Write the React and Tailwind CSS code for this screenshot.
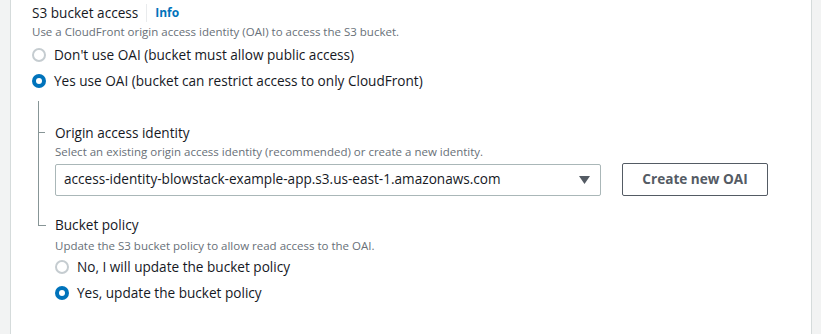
/**
 * S3 bucket access form section (CloudFront origin settings).
 */

function Radio({ checked, label }) {
  return (
    <label className="flex items-center gap-[8px] h-[26px]">
      {checked ? (
        <span className="w-[14px] h-[14px] rounded-full bg-[#0073bb] flex items-center justify-center">
          <span className="w-[6px] h-[6px] rounded-full bg-white" />
        </span>
      ) : (
        <span className="w-[14px] h-[14px] rounded-full border-2 border-[#c5ccd0] bg-white" />
      )}
      <span className="text-[13.6px] text-[#16191f]">{label}</span>
    </label>
  );
}

export default function App() {
  return (
    <div
      className="w-[821px] h-[334px] bg-[#f2f3f3] flex pl-[10px] pr-[9px] overflow-hidden"
      style={{ fontFamily: '"Open Sans", "Noto Sans", sans-serif' }}
    >
      <div className="flex-1 bg-white border-x border-[#d5dbdb] pl-[21px] pt-[3px]">
        {/* Section header */}
        <div className="flex items-center h-[20px]">
          <span className="text-[13.6px] text-[#16191f]">S3 bucket access</span>
          <span className="mx-[8px] w-px h-[18px] bg-[#e9ebed]" />
          <span className="text-[12px] font-bold text-[#0073bb]">Info</span>
        </div>
        <p className="text-[11.5px] text-[#687078] leading-[17px]">
          Use a CloudFront origin access identity (OAI) to access the S3 bucket.
        </p>
        <div className="mt-[2px]">
          <Radio label="Don't use OAI (bucket must allow public access)" />
          <Radio checked label="Yes use OAI (bucket can restrict access to only CloudFront)" />
        </div>

        {/* Nested settings with tree lines */}
        <div className="flex mt-[7px]">
          <div className="w-[7px] ml-[6px] flex flex-col">
            <div className="h-[31px] border-l border-[#879596]" />
            <div className="h-[93px] border-l border-t border-[#879596]" />
            <div className="h-px w-[8px] bg-[#879596]" />
          </div>
          <div className="flex-1 pl-[10px] pt-[23px]">
            <div className="text-[13.6px] text-[#16191f] leading-[18px]">Origin access identity</div>
            <p className="text-[11.5px] text-[#687078] leading-[17px] mt-[1px]">
              Select an existing origin access identity (recommended) or create a new identity.
            </p>
            <div className="flex items-center gap-[21px] mt-[3px]">
              <div className="w-[546px] h-[32px] border border-[#aab7b8] rounded-[2px] flex items-center justify-between pl-[8px] pr-[10px]">
                <span className="text-[13.6px] text-[#16191f]">
                  access-identity-blowstack-example-app.s3.us-east-1.amazonaws.com
                </span>
                <svg width="11" height="8" viewBox="0 0 11 8">
                  <path d="M0 0 H11 L5.5 8 Z" fill="#545b64" />
                </svg>
              </div>
              <button className="w-[146px] h-[33px] border border-[#545b64] rounded-[2px] text-[13.6px] font-bold text-[#545b64]">
                Create new OAI
              </button>
            </div>
            <div className="text-[13.6px] text-[#16191f] leading-[20px] mt-[19px]">Bucket policy</div>
            <p className="text-[11.5px] text-[#687078] leading-[17px] mt-[2px]">
              Update the S3 bucket policy to allow read access to the OAI.
            </p>
            <div>
              <Radio label="No, I will update the bucket policy" />
              <Radio checked label="Yes, update the bucket policy" />
            </div>
          </div>
        </div>
      </div>
    </div>
  );
}
